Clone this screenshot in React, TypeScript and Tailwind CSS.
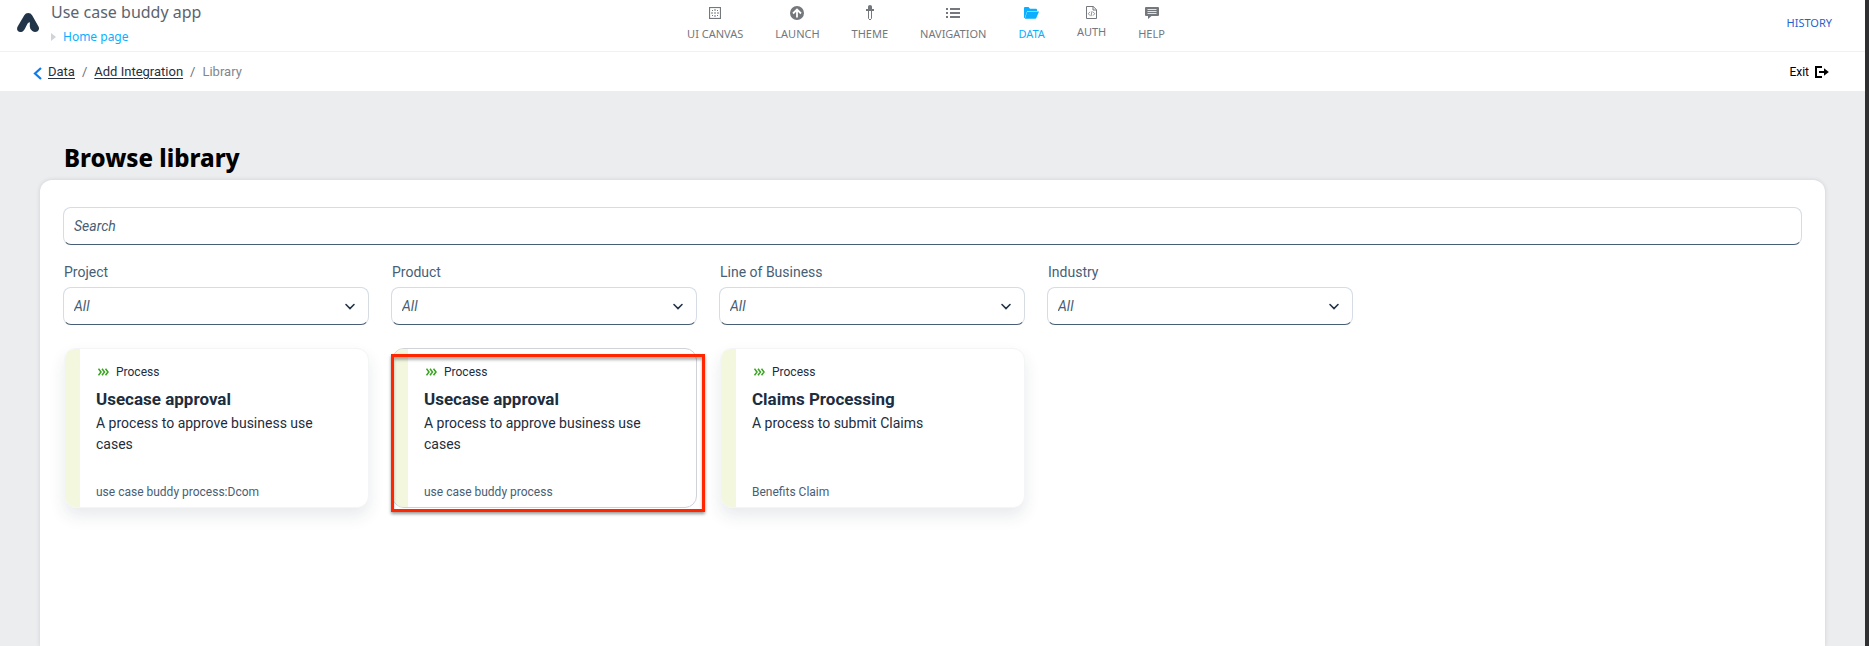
import React from "react";

type NavItem = { label: string; icon: React.ReactNode; active?: boolean; compact?: boolean };

const navItems: NavItem[] = [
  {
    label: "UI CANVAS",
    icon: (
      <svg width="12" height="12" viewBox="0 0 12 12" fill="none" stroke="currentColor">
        <rect x="0.5" y="0.5" width="11" height="11" strokeWidth="1.2" />
        <path d="M6 2v2M6 8v2M2 6h2M8 6h2M5 6h2M3 3.5h1M8 3.5h1M3 8.5h1M8 8.5h1" />
      </svg>
    ),
  },
  {
    label: "LAUNCH",
    icon: (
      <svg width="14" height="14" viewBox="0 0 14 14">
        <circle cx="7" cy="7" r="7" fill="currentColor" />
        <path d="M7 11.5V4M3 7.5 7 3.5l4 4" fill="none" stroke="#fff" strokeWidth="1.8" />
      </svg>
    ),
  },
  {
    label: "THEME",
    icon: (
      <svg width="8" height="16" viewBox="0 0 8 16">
        <path d="M2 4V1.5a2 1.5 0 0 1 4 0V4h2v2H0V4z" fill="currentColor" />
        <path d="M2.5 6v7.5L4 15l1.5-1.5V6" fill="none" stroke="currentColor" />
      </svg>
    ),
  },
  {
    label: "NAVIGATION",
    icon: (
      <svg width="14" height="10" viewBox="0 0 14 10" fill="currentColor">
        <path d="M0 0h2v2H0zM4 0h10v2H4zM0 4h2v2H0zM4 4h10v2H4zM0 8h2v2H0zM4 8h10v2H4z" />
      </svg>
    ),
  },
  {
    label: "DATA",
    active: true,
    icon: (
      <svg width="15" height="12" viewBox="0 0 15 12" fill="currentColor">
        <path d="M0 11V1q0-1 1-1h3.5L6 1.700h6q1 0 1 1V4H3.200L0.700 11z" />
        <path d="M3.200 4.600H15L12.300 11q-.3.7-1 .7H.8z" />
      </svg>
    ),
  },
  {
    label: "AUTH",
    compact: true,
    icon: (
      <svg width="11" height="13" viewBox="0 0 11 13" fill="none" stroke="currentColor">
        <path d="M.5.5h6.700l3.300 3.200v8.800H.5zM7 .5V4h3.500" />
        <path d="M4 5.800 2.300 7.700 4 9.600M7 5.800l1.700 1.900L7 9.600M6 5.200l-1 5" strokeWidth=".8" />
      </svg>
    ),
  },
  {
    label: "HELP",
    icon: (
      <svg width="14" height="12" viewBox="0 0 14 12">
        <path d="M1 0h12q1 0 1 1v7q0 1-1 1H6.500L3 12V9H1Q0 9 0 8V1q0-1 1-1z" fill="currentColor" />
        <path d="M2.500 2.500h9M2.500 4.500h9M2.500 6.500h9" stroke="#fff" strokeWidth=".8" />
      </svg>
    ),
  },
];

const filters = ["Project", "Product", "Line of Business", "Industry"];

const cards = [
  { title: "Usecase approval", text: "A process to approve business use cases", source: "use case buddy process:Dcom" },
  { title: "Usecase approval", text: "A process to approve business use cases", source: "use case buddy process", selected: true },
  { title: "Claims Processing", text: "A process to submit Claims", source: "Benefits Claim" },
];

const fieldClass =
  "h-[38px] w-full appearance-none rounded-lg border border-[#d5dce3] border-b-[#475e75] bg-white px-2.5 text-sm italic text-[#475e75] outline-none placeholder:text-[#475e75]";

function Header() {
  return (
    <header className="grid h-[52px] grid-cols-[1fr_auto_1fr] border-b border-[#eff1f2] pl-4 pr-[33px] font-['Noto_Sans',sans-serif]">
      <div className="flex items-start gap-3">
        <svg className="mt-3" width="23" height="21" viewBox="-1 -1 23 21" fill="#223548">
          <path d="M7.3 2.2Q8.6 0 11.2 0t3.9 2.2l6.4 11.2q1.5 3.4-1.2 5.1-2.6 1.2-5-.5-2.9-2-2.5-5.5.2-2-.2-3.5-2 .9-3.2 3.7Q7.3 17.6 5.2 18.7q-3 1-4.7-1.3-1-1.9.3-4.2z" />
        </svg>
        <div className="flex flex-col">
          <div className="text-base leading-6 text-[#5b6470]">Use case buddy app</div>
          <a href="#home" className="flex items-center gap-[7px] text-xs leading-[26px] text-[#0ab0ff]">
            <svg width="5" height="8" viewBox="0 0 5 8" fill="#cfd4da">
              <path d="M0 0l5 4-5 4z" />
            </svg>
            Home page
          </a>
        </div>
      </div>
      <nav className="flex items-start gap-8 pl-1">
        {navItems.map((item) => (
          <a
            key={item.label}
            href={"#" + item.label.toLowerCase()}
            className={"flex flex-col items-center pt-1 text-[11px] leading-4 " + (item.active ? "text-[#0ab0ff]" : "text-[#74777c]")}
          >
            <span className={item.compact ? "flex h-5 items-center pb-1" : "flex h-[22px] items-center pb-1"}>{item.icon}</span>
            {item.label}
          </a>
        ))}
      </nav>
      <a href="#history" className="mt-[15px] justify-self-end text-[11px] leading-4 text-[#1f62d0]">
        HISTORY
      </a>
    </header>
  );
}

function Breadcrumb() {
  return (
    <div className="flex h-[39px] items-center justify-between pl-[33px] pr-9 text-[13px]">
      <nav aria-label="Breadcrumb" className="flex items-center">
        <svg className="mr-1.5 mt-1" width="9" height="13" viewBox="0 0 9 13" fill="none" stroke="#0a7cf0" strokeWidth="2.2">
          <path d="M8 1 2 6.5 8 12" />
        </svg>
        <a href="#data" className="text-[#27303d] underline underline-offset-2">Data</a>
        <span className="mx-[7px] text-[#6a7078]">/</span>
        <a href="#add" className="text-[#27303d] underline underline-offset-2">Add Integration</a>
        <span className="mx-[7px] text-[#6a7078]">/</span>
        <span className="text-[#82868c]">Library</span>
      </nav>
      <button type="button" className="flex items-center gap-1.5 text-xs text-black">
        Exit
        <svg width="14" height="12" viewBox="0 0 14 12" fill="none" stroke="#000" strokeWidth="2">
          <path d="M7 1H1v10h6" />
          <path d="M4 6h7" />
          <path d="M9 2.3 13.8 6 9 9.7z" fill="#000" stroke="none" />
        </svg>
      </button>
    </div>
  );
}

function Filter({ label }: { label: string }) {
  const id = "filter-" + label.toLowerCase().replace(/ /g, "-");
  return (
    <div>
      <label htmlFor={id} className="block pb-[5px] pl-px text-sm text-[#475e75]">
        {label}
      </label>
      <div className="relative">
        <select id={id} className={fieldClass}>
          <option>All</option>
        </select>
        <svg className="pointer-events-none absolute right-[13px] top-4" width="12" height="8" viewBox="0 0 12 8" fill="none" stroke="#223548" strokeWidth="1.6" strokeLinecap="round">
          <path d="M2 1.5l4 4 4-4" />
        </svg>
      </div>
    </div>
  );
}

function LibraryCard({ title, text, source, selected }: { title: string; text: string; source: string; selected?: boolean }) {
  return (
    <div className="relative pl-px">
      <article
        className={
          "flex h-40 overflow-hidden rounded-xl border bg-white " +
          (selected ? "border-[#cfd2d6]" : "border-[#f3f5f6] shadow-[0_8px_16px_rgba(34,53,72,0.10)]")
        }
      >
        <div className="w-[15px] shrink-0 bg-[#f2f7de]" />
        <div className="flex flex-1 flex-col px-4 pb-[5px] pt-[13px] text-[#1d2d3e]">
          <div className="flex items-center gap-[7px] pl-0.5 text-xs leading-5">
            <svg width="11" height="8" viewBox="0 0 11 8" fill="none" stroke="#36a41d" strokeWidth="1.5">
              <path d="M.5.7 3 4 .5 7.3M4 .7 6.5 4 4 7.3M7.5.7 10 4 7.5 7.3" />
            </svg>
            Process
          </div>
          <h2 className="pt-[5px] text-[17px] font-bold leading-6">{title}</h2>
          <p className="max-w-[240px] pt-0.5 text-sm leading-[21px]">{text}</p>
          <div className="mt-auto text-xs leading-5 text-[#475e75]">{source}</div>
        </div>
      </article>
      {selected && (
        <div className="pointer-events-none absolute -bottom-1 -right-2 left-0 top-1.5 border-[3px] border-[#ff2600] shadow-[0_2px_3px_rgba(0,0,0,0.4),inset_0_3px_3px_rgba(0,0,0,0.3)]" />
      )}
    </div>
  );
}

export default function App() {
  return (
    <div className="flex min-h-screen flex-col border-r-4 border-[#303033] bg-white font-['Roboto','Noto_Sans',sans-serif]">
      <Header />
      <Breadcrumb />
      <main className="flex flex-1 flex-col bg-[#ecedef] px-10 pt-[49px]">
        <h1 className="pb-1 pl-6 font-['Noto_Sans',sans-serif] text-2xl font-extrabold leading-9">Browse library</h1>
        <section className="flex-1 rounded-t-xl bg-white px-[23px] pt-[27px] shadow-[0_0_4px_rgba(34,53,72,0.16)]">
          <input type="text" aria-label="Search" placeholder="Search" className={fieldClass} />
          <div className="grid grid-cols-[repeat(auto-fill,306px)] gap-x-[22px] pt-[17px]">
            {filters.map((label) => (
              <Filter key={label} label={label} />
            ))}
          </div>
          <div className="grid grid-cols-[repeat(auto-fill,306px)] gap-[22px] py-[23px]">
            {cards.map((card) => (
              <LibraryCard key={card.source} {...card} />
            ))}
          </div>
        </section>
      </main>
    </div>
  );
}
